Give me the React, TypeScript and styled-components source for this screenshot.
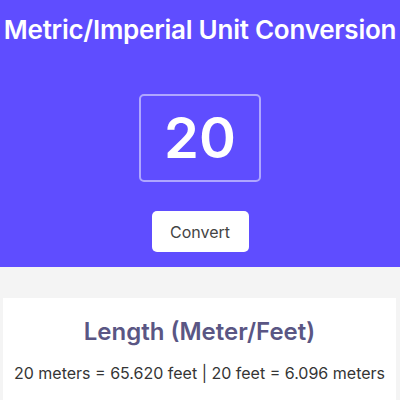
import React, { useState } from "react";
import styled, { createGlobalStyle } from "styled-components";

const Global = createGlobalStyle`
  html, body { margin: 0; padding: 0; background: #f4f4f4; }
  body { font-family: Inter, "Noto Sans", sans-serif; }
  * { box-sizing: border-box; }
`;

const Header = styled.header`
  background: #5f4dff;
  height: 267px;
  display: flex;
  flex-direction: column;
  align-items: center;
  padding-top: 14px;
`;

const Title = styled.h1`
  margin: 0;
  color: #fff;
  font-size: 26px;
  font-weight: 600;
  line-height: 32px;
  white-space: nowrap;
  letter-spacing: -0.25px;
`;

const NumberInput = styled.input`
  margin-top: 48px;
  width: 122px;
  height: 88px;
  background: transparent;
  border: 2px solid rgba(255, 255, 255, 0.5);
  border-radius: 5px;
  color: #fff;
  font-family: Inter, sans-serif;
  font-size: 56px;
  font-weight: 600;
  text-align: center;
  outline: none;
  padding: 0;
`;

const Button = styled.button`
  margin-top: 29px;
  width: 97px;
  height: 41px;
  background: #fff;
  border: none;
  border-radius: 5px;
  color: #444;
  font-family: Inter, sans-serif;
  font-size: 16px;
  cursor: pointer;
`;

const Main = styled.main`
  padding: 31px 4px 0 3px;
`;

const Card = styled.section`
  background: #fff;
  display: flex;
  flex-direction: column;
  align-items: center;
  padding-top: 19px;
  height: 120px;
`;

const CardTitle = styled.h2`
  margin: 0;
  color: #5a5684;
  font-size: 24px;
  font-weight: 600;
  line-height: 30px;
`;

const Result = styled.p`
  margin: 14px 0 0;
  color: #353535;
  font-size: 16px;
  line-height: 24px;
  white-space: nowrap;
`;

export default function App() {
  const [value, setValue] = useState("20");
  return (
    <>
      <Global />
      <Header>
        <Title>Metric/Imperial Unit Conversion</Title>
        <NumberInput value={value} onChange={(e) => setValue(e.target.value)} />
        <Button>Convert</Button>
      </Header>
      <Main>
        <Card>
          <CardTitle>Length (Meter/Feet)</CardTitle>
          <Result>20 meters = 65.620 feet | 20 feet = 6.096 meters</Result>
        </Card>
      </Main>
    </>
  );
}
